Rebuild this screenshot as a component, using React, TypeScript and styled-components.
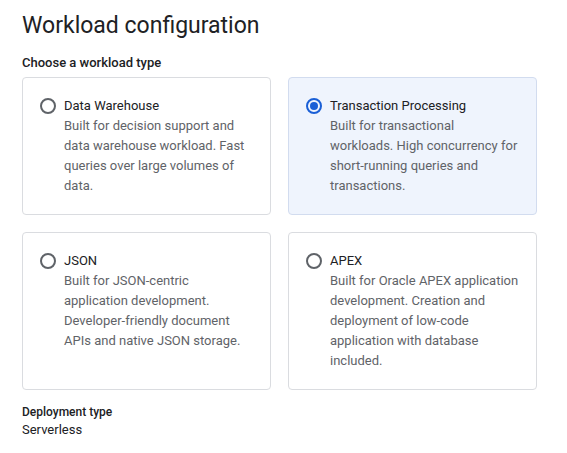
import React from "react";
import styled, { createGlobalStyle } from "styled-components";

const Global = createGlobalStyle`
  html, body { margin: 0; padding: 0; background: #ffffff; }
  body { font-family: Roboto, "Noto Sans", Arial, sans-serif; color: #202124; }
`;

const Page = styled.div`
  padding: 12px 22px 0 22px;
  width: 515px;
`;

const Title = styled.h1`
  margin: 0;
  font-size: 23px;
  font-weight: 400;
  line-height: 28px;
  color: #202124;
`;

const Subtitle = styled.div`
  margin-top: 15px;
  font-size: 13px;
  font-weight: 500;
  line-height: 16px;
  color: #202124;
`;

const Grid = styled.div`
  margin-top: 6px;
  display: grid;
  grid-template-columns: 249px 249px;
  column-gap: 17px;
  row-gap: 17px;
`;

const Card = styled.div<{ $selected?: boolean }>`
  box-sizing: border-box;
  display: flex;
  align-items: flex-start;
  gap: 8px;
  padding: 18px 16px 18px 17px;
  border: 1px solid ${(p) => (p.$selected ? "#d2dcef" : "#dadce0")};
  border-radius: 4px;
  background: ${(p) => (p.$selected ? "#eff4fd" : "#ffffff")};
  cursor: pointer;
`;

const Radio = styled.span<{ $checked?: boolean }>`
  box-sizing: border-box;
  flex: none;
  width: 16px;
  height: 16px;
  margin-top: 2px;
  border-radius: 50%;
  border: 2px solid ${(p) => (p.$checked ? "#1a5fd6" : "#5f6368")};
  display: flex;
  align-items: center;
  justify-content: center;
  &::after {
    content: "";
    width: 8px;
    height: 8px;
    border-radius: 50%;
    background: #1a5fd6;
    display: ${(p) => (p.$checked ? "block" : "none")};
  }
`;

const Body = styled.div`
  display: flex;
  flex-direction: column;
  font-size: 13px;
  line-height: 20px;
`;

const CardTitle = styled.div`
  color: #202124;
`;

const CardDesc = styled.div`
  color: #5f6368;
`;

const Deploy = styled.div`
  margin-top: 14px;
  display: flex;
  flex-direction: column;
`;

const DeployLabel = styled.div`
  font-size: 12px;
  font-weight: 500;
  line-height: 16px;
  color: #202124;
`;

const DeployValue = styled.div`
  font-size: 13px;
  line-height: 20px;
  color: #202124;
`;

const options = [
  {
    title: "Data Warehouse",
    desc: "Built for decision support and data warehouse workload. Fast queries over large volumes of data.",
  },
  {
    title: "Transaction Processing",
    desc: "Built for transactional workloads. High concurrency for short-running queries and transactions.",
    selected: true,
  },
  {
    title: "JSON",
    desc: "Built for JSON-centric application development. Developer-friendly document APIs and native JSON storage.",
  },
  {
    title: "APEX",
    desc: "Built for Oracle APEX application development. Creation and deployment of low-code application with database included.",
  },
];

export default function App() {
  return (
    <>
      <Global />
      <Page>
        <Title>Workload configuration</Title>
        <Subtitle>Choose a workload type</Subtitle>
        <Grid>
          {options.map((o) => (
            <Card key={o.title} $selected={o.selected}>
              <Radio $checked={o.selected} />
              <Body>
                <CardTitle>{o.title}</CardTitle>
                <CardDesc>{o.desc}</CardDesc>
              </Body>
            </Card>
          ))}
        </Grid>
        <Deploy>
          <DeployLabel>Deployment type</DeployLabel>
          <DeployValue>Serverless</DeployValue>
        </Deploy>
      </Page>
    </>
  );
}
